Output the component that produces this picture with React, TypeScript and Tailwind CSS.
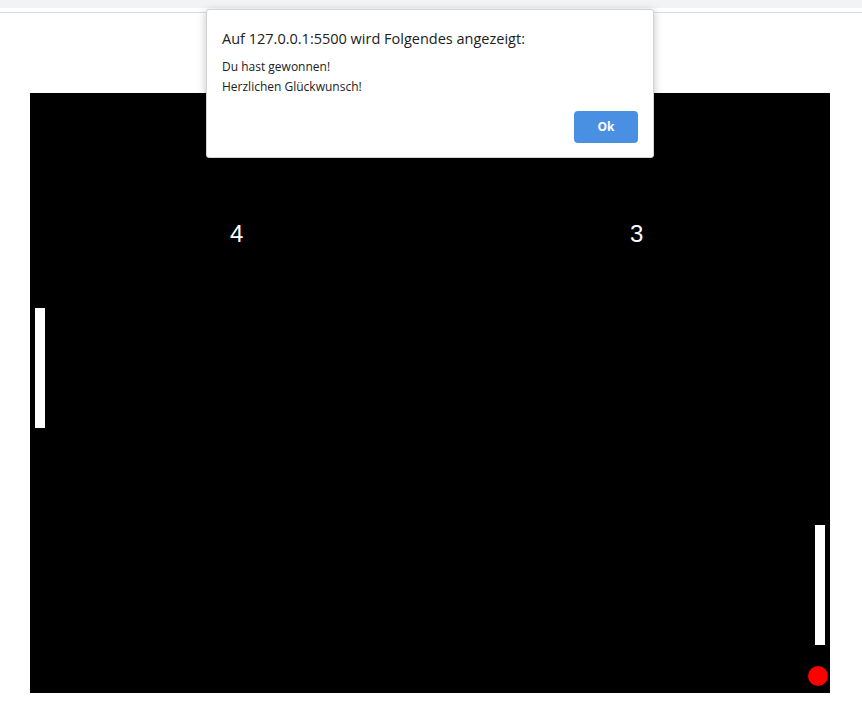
import React from 'react';

const AlertDialog = () => {
  return (
    <div
      className="absolute left-[206px] top-[9px] w-[448px] h-[149px] bg-white rounded-[3px] border border-[#d4d4d4] shadow-[0_2px_8px_rgba(0,0,0,0.25)]"
      style={{ fontFamily: '"Open Sans", "Noto Sans", sans-serif' }}
    >
      <div className="pl-[15px] pr-4 pt-[19px]">
        <div className="text-[14.5px] leading-[20px] text-[#202124]">
          Auf 127.0.0.1:5500 wird Folgendes angezeigt:
        </div>
        <div className="mt-[8px] text-[12px] leading-[20px] text-[#202124]">
          <div>Du hast gewonnen!</div>
          <div>Herzlichen Glückwunsch!</div>
        </div>
      </div>
      <button className="absolute right-[15px] bottom-[14px] w-[64px] h-[32px] rounded-[4px] bg-[#4a90e2] text-white text-[12px] font-bold">
        Ok
      </button>
    </div>
  );
};

const App = () => {
  return (
    <div className="relative w-[862px] h-[716px] bg-white overflow-hidden">
      <div className="h-[8px] bg-[#f1f3f4]" />
      <div className="h-[5px] border-b border-[#dadce0]" />
      <div className="pt-[80px] pl-[30px]">
        <div className="relative w-[800px] h-[600px] bg-black" style={{ fontFamily: '"Liberation Sans", Arial, sans-serif' }}>
          <span className="absolute left-[200px] top-[127px] text-[24px] leading-[28px] text-white">4</span>
          <span className="absolute left-[600px] top-[127px] text-[24px] leading-[28px] text-white">3</span>
          <div className="absolute left-[5px] top-[215px] w-[10px] h-[120px] bg-white" />
          <div className="absolute left-[785px] top-[432px] w-[10px] h-[120px] bg-white" />
          <div className="absolute left-[778px] top-[573px] w-[20px] h-[20px] rounded-full bg-[#ff0000]" />
        </div>
      </div>
      <AlertDialog />
    </div>
  );
};

export default App;
